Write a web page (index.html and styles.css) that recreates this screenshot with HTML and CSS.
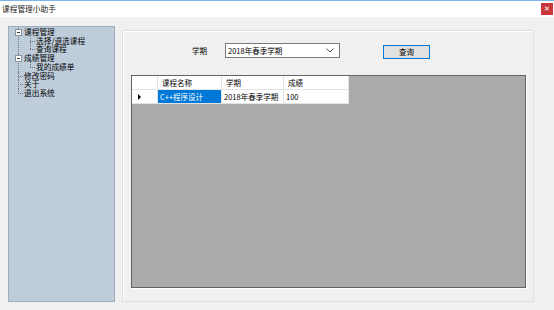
FILE: index.html
```html
<!DOCTYPE html>
<html lang="zh-CN">
<head>
  <meta charset="UTF-8">
  <title>课程管理小助手</title>
  <link rel="stylesheet" href="styles.css">
</head>
<body>

  <div class="titlebar">
    <span class="title">课程管理小助手</span>
    <span class="close">&#x2715;</span>
  </div>

  <div class="main">
    <div class="nav">
      <ul class="tree">
        <li class="node open">
          <span class="box"></span><span class="label">课程管理</span>
          <ul class="sub">
            <li>选择/退选课程</li>
            <li>查询课程</li>
          </ul>
        </li>
        <li class="node open">
          <span class="box"></span><span class="label">成绩管理</span>
          <ul class="sub">
            <li>我的成绩单</li>
          </ul>
        </li>
        <li class="node leaf"><span class="label">修改密码</span></li>
        <li class="node leaf"><span class="label">关于</span></li>
        <li class="node leaf last"><span class="label">退出系统</span></li>
      </ul>
    </div>

    <div class="group">
      <div class="filter">
        <span class="filter-label">学期</span>
        <div class="combo">
          <span>2018年春季学期</span>
          <svg width="8" height="5" viewBox="0 0 8 5"><path d="M0.5 0.5 L4 4 L7.5 0.5" fill="none" stroke="#555" stroke-width="1"/></svg>
        </div>
        <button class="query">查询</button>
      </div>

      <div class="grid">
        <div class="row head">
          <div class="cell rh"></div>
          <div class="cell c1">课程名称</div>
          <div class="cell c2">学期</div>
          <div class="cell c3">成绩</div>
        </div>
        <div class="row">
          <div class="cell rh"><span class="arrow"></span></div>
          <div class="cell c1 sel">C++程序设计</div>
          <div class="cell c2">2018年春季学期</div>
          <div class="cell c3">100</div>
        </div>
      </div>
    </div>
  </div>

</body>
</html>
```

FILE: styles.css
```css
* {
  box-sizing: border-box;
}

body {
  margin: 0;
  background-color: #f0f0f0;
  font-family: "Noto Sans CJK SC", "Liberation Sans", sans-serif;
  font-size: 7.5px;
  color: #000;
  width: 554px;
  height: 310px;
  overflow: hidden;
}

.titlebar {
  height: 17px;
  background-color: #fff;
  border-top: 1px solid #7eb4ea;
  display: flex;
  align-items: center;
  justify-content: space-between;
  padding: 0 1px 0 2px;
}

.title {
  font-size: 7.7px;
  line-height: 10px;
  color: #222;
}

.close {
  width: 12px;
  height: 12px;
  background-color: #c8383a;
  color: #fff;
  font-size: 7px;
  line-height: 12px;
  text-align: center;
  font-family: "DejaVu Sans", sans-serif;
}

.main {
  display: flex;
  padding: 9px 0 0 8px;
  gap: 7px;
}

/* left tree */
.nav {
  width: 107px;
  height: 276px;
  background-color: #bfcddb;
  border: 1px solid #9cadc2;
  padding: 1px 0 0 5px;
  font-size: 7.7px;
}

.tree, .sub {
  list-style: none;
  margin: 0;
  padding: 0;
}

.tree li {
  line-height: 8.7px;
  white-space: nowrap;
}

.node {
  position: relative;
  padding-left: 10px;
}

.node::before {
  /* vertical dotted line of the root level */
  content: "";
  position: absolute;
  left: 4px;
  top: 0;
  bottom: 0;
  border-left: 1px dotted #6d7785;
}

.node.last::before {
  bottom: 4px;
}

.node.leaf::after {
  content: "";
  position: absolute;
  left: 4px;
  top: 4px;
  width: 5px;
  border-top: 1px dotted #6d7785;
}

.box {
  position: absolute;
  left: 1px;
  top: 1px;
  width: 7px;
  height: 7px;
  background-color: #fff;
  border: 1px solid #8a949f;
  z-index: 1;
}

.box::after {
  content: "";
  position: absolute;
  left: 1px;
  top: 2px;
  width: 3px;
  border-top: 1px solid #333;
}

.sub {
  position: relative;
  margin-left: 6px;
}

.sub li {
  position: relative;
  padding-left: 6px;
}

.sub li::before {
  content: "";
  position: absolute;
  left: 0;
  top: -4px;
  height: 8px;
  border-left: 1px dotted #6d7785;
}

.sub li::after {
  content: "";
  position: absolute;
  left: 0;
  top: 4px;
  width: 5px;
  border-top: 1px dotted #6d7785;
}

/* right group */
.group {
  margin-top: 4px;
  width: 412px;
  height: 272px;
  border: 1px solid #dedede;
  box-shadow: inset 1px 1px 0 #fff;
  padding: 11px 0 0 8px;
}

.filter {
  display: flex;
  align-items: center;
  height: 17px;
  padding-left: 61px;
}

.filter-label {
  width: 33px;
  line-height: 10px;
}

.combo {
  width: 115px;
  height: 15px;
  background-color: #fff;
  border: 1px solid #7a7a7a;
  display: flex;
  align-items: center;
  justify-content: space-between;
  padding: 0 5px 0 2px;
  line-height: 10px;
}

.query {
  margin-left: 43px;
  margin-top: 3px;
  width: 47px;
  height: 14px;
  padding: 0;
  font-family: inherit;
  font-size: 7.5px;
  line-height: 10px;
  color: #000;
  background-color: #e1e1e1;
  border: 1px solid #0078d7;
  box-shadow: inset 0 0 0 1px #e1e1e1;
}

.grid {
  margin-top: 16px;
  width: 395px;
  height: 213px;
  background-color: #ababab;
  border: 1px solid #646464;
  box-shadow: 1px 1px 0 #fff;
}

.row {
  display: flex;
  height: 14px;
}

.cell {
  background-color: #fff;
  border-right: 1px solid #e3e3e3;
  border-bottom: 1px solid #e3e3e3;
  line-height: 13px;
  padding-left: 2px;
  white-space: nowrap;
}

.head .cell {
  padding-left: 4px;
}

.rh {
  width: 26px;
  position: relative;
}

.c1 { width: 64px; }
.c2 { width: 62px; }
.c3 { width: 65px; }

.sel {
  background-color: #0078d7;
  color: #fff;
}

.arrow {
  position: absolute;
  left: 6px;
  top: 4px;
  border-left: 3px solid #000;
  border-top: 3px solid transparent;
  border-bottom: 3px solid transparent;
}
```
